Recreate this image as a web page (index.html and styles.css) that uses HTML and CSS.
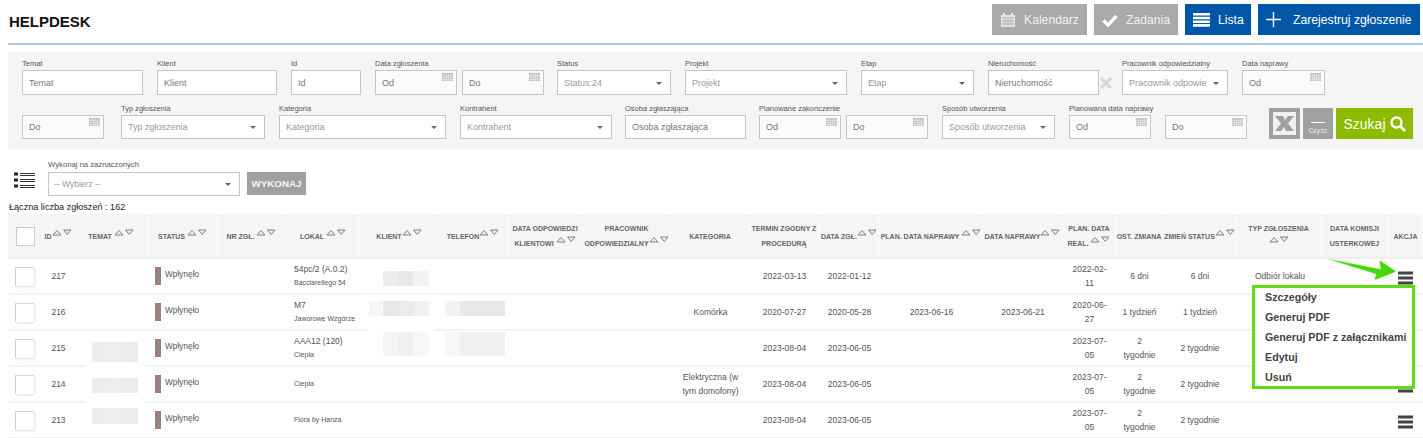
FILE: index.html
```html
<!DOCTYPE html>
<html lang="pl">
<head>
<meta charset="UTF-8">
<meta name="viewport" content="width=device-width, initial-scale=1.0">
<title>Helpdesk</title>
<link rel="stylesheet" href="styles.css">
</head>
<body>

<svg class="sprites" width="0" height="0">
  <symbol id="sort" viewBox="0 0 20 7">
    <path d="M1 6 L5 1.500 L9 6 Z M11.500 1 L19 1 L15.250 5.500 Z" fill="#eee" stroke="#777" stroke-width="0.9"/>
  </symbol>
  <symbol id="cal" viewBox="0 0 11 8">
    <path d="M0 0h11v8H0z" fill="#c4c4c4"/>
    <path d="M0 2.500h11M0 4.500h11M0 6.500h11M2.500 1v7M4.500 1v7M6.500 1v7M8.500 1v7" stroke="#eee" stroke-width="0.5"/>
  </symbol>
  <symbol id="burger" viewBox="0 0 15 14">
    <path d="M0 0.500h15v3H0zM0 5.500h15v3H0zM0 10.500h15v3H0z" fill="#444"/>
  </symbol>
</svg>

<div class="page">
  <header class="top">
    <h1>HELPDESK</h1>
    <nav class="top-btns">
      <a class="top-btn grey w-kal">
        <svg width="16" height="16" viewBox="0 0 16 16"><path d="M1 3h14v12H1z" fill="#e4e4e4"/><path d="M4 1v3M12 1v3" stroke="#e4e4e4" stroke-width="2"/><path d="M2 6h12M2 9h12M2 12h12M5 6v8M8 6v8M11 6v8" stroke="#aaa" stroke-width="0.8"/></svg>
        Kalendarz
      </a>
      <a class="top-btn grey w-zad">
        <svg width="16" height="14" viewBox="0 0 16 14"><path d="M1.500 7.500 L6 12 L14.500 3" fill="none" stroke="#fff" stroke-width="3.400"/></svg>
        Zadania
      </a>
      <a class="top-btn blue w-lista">
        <svg width="17" height="14" viewBox="0 0 17 14"><path d="M0 0h17v2.600H0zM0 3.700h17v2.600H0zM0 7.400h17v2.600H0zM0 11.100h17v2.600H0z" fill="#fff"/></svg>
        Lista
      </a>
      <a class="top-btn blue w-zar">
        <svg class="plus" width="15" height="15" viewBox="0 0 15 15"><path d="M7.500 0v15M0 7.500h15" stroke="#fff" stroke-width="1.400"/></svg>
        Zarejestruj zgłoszenie
      </a>
    </nav>
  </header>

  <section class="filters">
    <div class="f-row">
      <div class="field w121"><label>Temat</label><div class="inp">Temat</div></div>
      <div class="field w120"><label>Klient</label><div class="inp">Klient</div></div>
      <div class="field w70"><label>Id</label><div class="inp">Id</div></div>
      <div class="field w169">
        <label>Data zgłoszenia</label>
        <div class="dates">
          <div class="inp date">Od<svg class="cal"><use href="#cal"/></svg></div>
          <div class="inp date">Do<svg class="cal"><use href="#cal"/></svg></div>
        </div>
      </div>
      <div class="field w114 ml-1"><label>Status</label><div class="inp sel">Status:24</div></div>
      <div class="field w162"><label>Projekt</label><div class="inp sel">Projekt</div></div>
      <div class="field w113"><label>Etap</label><div class="inp sel">Etap</div></div>
      <div class="field w111"><label>Nieruchomość</label><div class="inp">Nieruchomość</div></div>
      <svg class="clear-x" width="12" height="12" viewBox="0 0 12 12"><path d="M1 1 L11 11 M11 1 L1 11" stroke="#d6d6d6" stroke-width="3"/></svg>
      <div class="field w106"><label>Pracownik odpowiedzialny</label><div class="inp sel">Pracownik odpowie</div></div>
      <div class="field w83"><label>Data naprawy</label><div class="inp date">Od<svg class="cal"><use href="#cal"/></svg></div></div>
    </div>

    <div class="f-row second">
      <div class="field w82"><div class="inp date">Do<svg class="cal"><use href="#cal"/></svg></div></div>
      <div class="field w144 ml3"><label>Typ zgłoszenia</label><div class="inp sel">Typ zgłoszenia</div></div>
      <div class="field w167"><label>Kategoria</label><div class="inp sel">Kategoria</div></div>
      <div class="field w152"><label>Kontrahent</label><div class="inp sel">Kontrahent</div></div>
      <div class="field w121 ml-1"><label>Osoba zgłaszająca</label><div class="inp">Osoba zgłaszająca</div></div>
      <div class="field w169 ml-1">
        <label>Planowane zakończenie</label>
        <div class="dates">
          <div class="inp date">Od<svg class="cal"><use href="#cal"/></svg></div>
          <div class="inp date">Do<svg class="cal"><use href="#cal"/></svg></div>
        </div>
      </div>
      <div class="field w113"><label>Sposób utworzenia</label><div class="inp sel">Sposób utworzenia</div></div>
      <div class="field w82"><label>Planowana data naprawy</label><div class="inp date">Od<svg class="cal"><use href="#cal"/></svg></div></div>
      <div class="field w82"><div class="inp date">Do<svg class="cal"><use href="#cal"/></svg></div></div>
      <div class="f-actions">
        <a class="btn-excel">
          <svg width="31" height="31" viewBox="0 0 31 31"><path d="M0 0h31v31H0z" fill="#a0a0a0"/><path d="M4 4h23v23H4z" fill="#f0f0f0"/><path d="M6 8h8l2 4 3-4h6l-6 7.500 6 7.500h-8l-2-4-3 4H6l6-7.500z" fill="#a0a0a0"/></svg>
        </a>
        <a class="btn-clear"><span class="dash"></span><span class="clear-txt">Czyść</span></a>
        <a class="btn-search">Szukaj
          <svg width="16" height="16" viewBox="0 0 16 16"><circle cx="6.500" cy="6.500" r="5" fill="none" stroke="#fff" stroke-width="2.400"/><path d="M10.500 10.500 L15 15" stroke="#fff" stroke-width="2.800"/></svg>
        </a>
      </div>
    </div>
  </section>

  <section class="bulk">
    <svg class="bulk-icon" width="21" height="16" viewBox="0 0 21 16"><path d="M0 0.500h4v3H0zM0 6.500h4v3H0zM0 12.500h4v3H0z" fill="#222"/><path d="M6 1h15v1H6zM6 3h15v1H6zM6 7h15v1H6zM6 9h15v1H6zM6 13h15v1H6zM6 15h15v1H6z" fill="#333"/></svg>
    <div class="bulk-field">
      <label>Wykonaj na zaznaczonych</label>
      <div class="inp sel">-- Wybierz --</div>
    </div>
    <a class="btn-run">WYKONAJ</a>
  </section>

  <p class="count">Łączna liczba zgłoszeń : 162</p>

  <div class="table-wrap">
    <table class="tickets">
      <colgroup>
        <col class="c35"><col class="c31"><col class="c75"><col class="c68"><col class="c70">
        <col class="c73"><col class="c79"><col class="c69"><col class="c75"><col class="c88">
        <col class="c79"><col class="c69"><col class="c61"><col class="c103"><col class="c80">
        <col class="c53"><col class="c47"><col class="c74"><col class="c84"><col class="c68"><col class="c34">
      </colgroup>
      <thead>
        <tr>
          <th><span class="check head"></span></th>
          <th>ID<svg class="sort"><use href="#sort"/></svg></th>
          <th>TEMAT <svg class="sort"><use href="#sort"/></svg></th>
          <th>STATUS <svg class="sort"><use href="#sort"/></svg></th>
          <th>NR ZGŁ. <svg class="sort"><use href="#sort"/></svg></th>
          <th>LOKAL <svg class="sort"><use href="#sort"/></svg></th>
          <th>KLIENT<svg class="sort"><use href="#sort"/></svg></th>
          <th>TELEFON<svg class="sort"><use href="#sort"/></svg></th>
          <th>DATA ODPOWIEDZI KLIENTOWI <svg class="sort"><use href="#sort"/></svg></th>
          <th>PRACOWNIK ODPOWIEDZIALNY<svg class="sort"><use href="#sort"/></svg></th>
          <th>KATEGORIA</th>
          <th>TERMIN ZGODNY Z PROCEDURĄ</th>
          <th>DATA ZGŁ.<svg class="sort"><use href="#sort"/></svg></th>
          <th>PLAN. DATA NAPRAWY <svg class="sort"><use href="#sort"/></svg></th>
          <th>DATA NAPRAWY<svg class="sort"><use href="#sort"/></svg></th>
          <th>PLAN. DATA REAL. <svg class="sort"><use href="#sort"/></svg></th>
          <th>OST. ZMIANA</th>
          <th>ZMIEŃ STATUS<svg class="sort"><use href="#sort"/></svg></th>
          <th class="pad">TYP ZGŁOSZENIA <svg class="sort"><use href="#sort"/></svg></th>
          <th>DATA KOMISJI USTERKOWEJ</th>
          <th>AKCJA</th>
        </tr>
      </thead>
      <tbody>
        <tr>
          <td><span class="check"></span></td>
          <td>217</td>
          <td></td>
          <td class="left"><div class="status"><i class="swatch"></i><span>Wpłynęło</span></div></td>
          <td></td>
          <td class="left lokal">54pc/2 (A.0.2)<small>Bacciarellego 54</small></td>
          <td><div class="blur blur-short"></div></td>
          <td></td><td></td><td></td><td></td>
          <td>2022-03-13</td>
          <td>2022-01-12</td>
          <td></td><td></td>
          <td class="narrow">2022-02-11</td>
          <td class="narrow">6 dni</td>
          <td>6 dni</td>
          <td class="left typ">Odbiór lokalu</td>
          <td></td>
          <td class="akcja"><svg class="burger"><use href="#burger"/></svg></td>
        </tr>
        <tr>
          <td><span class="check"></span></td>
          <td>216</td>
          <td></td>
          <td class="left"><div class="status"><i class="swatch"></i><span>Wpłynęło</span></div></td>
          <td></td>
          <td class="left lokal">M7<small>Jaworowe Wzgórze</small></td>
          <td><div class="blur blur-wide"></div></td>
          <td><div class="blur blur-wide tel"></div></td>
          <td></td><td></td>
          <td>Komórka</td>
          <td>2020-07-27</td>
          <td>2020-05-28</td>
          <td>2023-06-16</td>
          <td>2023-06-21</td>
          <td class="narrow">2020-06-27</td>
          <td class="narrow">1 tydzień</td>
          <td>1 tydzień</td>
          <td></td><td></td>
          <td class="akcja"><svg class="burger"><use href="#burger"/></svg></td>
        </tr>
        <tr>
          <td><span class="check"></span></td>
          <td>215</td>
          <td><div class="blur blur-temat r3"></div></td>
          <td class="left"><div class="status"><i class="swatch"></i><span>Wpłynęło</span></div></td>
          <td></td>
          <td class="left lokal">AAA12 (120)<small>Ciepła</small></td>
          <td><div class="blur blur-faint"></div></td>
          <td><div class="blur blur-faint tel"></div></td>
          <td></td><td></td><td></td>
          <td>2023-08-04</td>
          <td>2023-06-05</td>
          <td></td><td></td>
          <td class="narrow">2023-07-05</td>
          <td class="narrow">2 tygodnie</td>
          <td>2 tygodnie</td>
          <td></td><td></td>
          <td class="akcja"><svg class="burger"><use href="#burger"/></svg></td>
        </tr>
        <tr>
          <td><span class="check"></span></td>
          <td>214</td>
          <td><div class="blur blur-temat r4"></div></td>
          <td class="left"><div class="status"><i class="swatch"></i><span>Wpłynęło</span></div></td>
          <td></td>
          <td class="left lokal"><small>Ciepła</small></td>
          <td></td><td></td><td></td><td></td>
          <td class="pad">Elektryczna (w tym domofony)</td>
          <td>2023-08-04</td>
          <td>2023-06-05</td>
          <td></td><td></td>
          <td class="narrow">2023-07-05</td>
          <td class="narrow">2 tygodnie</td>
          <td>2 tygodnie</td>
          <td></td><td></td>
          <td class="akcja"><svg class="burger"><use href="#burger"/></svg></td>
        </tr>
        <tr>
          <td><span class="check"></span></td>
          <td>213</td>
          <td><div class="blur blur-temat r5"></div></td>
          <td class="left"><div class="status"><i class="swatch"></i><span>Wpłynęło</span></div></td>
          <td></td>
          <td class="left lokal"><small>Flora by Hanza</small></td>
          <td></td><td></td><td></td><td></td><td></td>
          <td>2023-08-04</td>
          <td>2023-06-05</td>
          <td></td><td></td>
          <td class="narrow">2023-07-05</td>
          <td class="narrow">2 tygodnie</td>
          <td>2 tygodnie</td>
          <td></td><td></td>
          <td class="akcja"><svg class="burger"><use href="#burger"/></svg></td>
        </tr>
      </tbody>
    </table>

    <svg class="arrow" width="72" height="26" viewBox="0 0 72 26"><path d="M1 1 L54 11.500 L52.500 2.500 L69 13.500 L47.500 22 L49.500 16 Z" fill="#45d60c"/></svg>

    <ul class="menu">
      <li>Szczegóły</li>
      <li>Generuj PDF</li>
      <li>Generuj PDF z załącznikami</li>
      <li>Edytuj</li>
      <li>Usuń</li>
    </ul>
  </div>
</div>

</body>
</html>
```

FILE: styles.css
```css
* {
  box-sizing: border-box;
}
html, body {
  height: 438px;
  overflow: hidden;
}
body {
  font-family: "Liberation Sans", Arial, sans-serif;
  margin: 0;
  padding: 0;
  background-color: #fff;
  color: #555;
}
.sprites {
  display: block;
  height: 0;
}
.page {
  padding-left: 8px;
}

/* top bar */
.top {
  display: flex;
  justify-content: space-between;
  height: 45px;
  padding: 4px 3px 0 1px;
  border-bottom: 2px solid #a6c8e4;
}
.top h1 {
  margin: 9px 0 0;
  font-size: 15px;
  line-height: 17px;
  color: #111;
}
.top-btns {
  display: flex;
  gap: 7px;
}
.top-btn {
  display: flex;
  align-items: center;
  gap: 8px;
  height: 31px;
  padding-left: 8px;
  font-size: 12.2px;
  color: #fff;
}
.top-btn.grey {
  background-color: #aaa;
  color: #f0f0f0;
}
.top-btn.blue {
  background-color: #0057a8;
}
.top-btn .plus {
  margin-right: 4px;
}
.w-kal { width: 95px; }
.w-zad { width: 84px; }
.w-lista { width: 66px; }
.w-zar { width: 162px; }

/* filters */
.filters {
  margin-top: 7px;
  height: 98px;
  padding: 7px 0 0 14px;
  background-color: #f5f5f5;
}
.f-row {
  display: flex;
  align-items: flex-end;
  gap: 14px;
}
.f-row.second {
  margin-top: 9px;
}
.field label, .bulk-field label {
  display: block;
  height: 11px;
  font-size: 7.5px;
  line-height: 9px;
  color: #555;
  white-space: nowrap;
}
.inp {
  position: relative;
  display: flex;
  align-items: center;
  height: 25px;
  padding-left: 6px;
  background-color: #fff;
  border: 1px solid #c6c6c6;
  font-size: 9px;
  color: #777;
  white-space: nowrap;
  overflow: hidden;
}
.second .inp {
  height: 24px;
}
.inp.date {
  background-color: #fbfbfb;
}
.inp.sel {
  padding-right: 20px;
  color: #999;
}
.inp.sel::after {
  content: "";
  position: absolute;
  right: 8px;
  top: 50%;
  margin-top: -1px;
  border: 3px solid transparent;
  border-top: 3px solid #666;
  border-bottom: 0;
}
.cal {
  position: absolute;
  right: 3px;
  top: 2px;
  width: 11px;
  height: 8px;
}
.dates {
  display: flex;
  gap: 5px;
}
.dates .inp {
  width: 82px;
}
.w70 { width: 70px; }
.w82 { width: 82px; }
.w83 { width: 83px; }
.w106 { width: 106px; }
.w111 { width: 111px; }
.w113 { width: 113px; }
.w114 { width: 114px; }
.w120 { width: 120px; }
.w121 { width: 121px; }
.w144 { width: 144px; }
.w152 { width: 152px; }
.w162 { width: 162px; }
.w167 { width: 167px; }
.w169 { width: 169px; }
.ml3 { margin-left: 3px; }
.ml-1 { margin-left: -1px; }
.clear-x {
  flex: none;
  margin: 0 -4px 6px -13px;
}
.f-actions {
  display: flex;
  gap: 3px;
  margin-left: 8px;
}
.btn-excel {
  display: block;
  width: 31px;
  height: 31px;
}
.btn-clear {
  display: flex;
  flex-direction: column;
  align-items: center;
  width: 30px;
  height: 31px;
  background-color: #a0a0a0;
}
.btn-clear .dash {
  width: 14px;
  height: 1px;
  margin-top: 14px;
  background-color: #fff;
}
.btn-clear .clear-txt {
  margin-top: 4px;
  font-size: 6.5px;
  font-weight: bold;
  color: #ddd;
}
.btn-search {
  display: flex;
  align-items: center;
  justify-content: center;
  gap: 4px;
  width: 77px;
  height: 31px;
  background-color: #8dbb00;
  color: #fff;
  font-size: 14px;
}

/* bulk action row */
.bulk {
  display: flex;
  align-items: flex-start;
  height: 36px;
  margin-top: 10px;
}
.bulk-icon {
  margin: 12px 13px 0 6px;
}
.bulk-field {
  width: 192px;
}
.bulk-field label {
  height: 12px;
  font-size: 7.7px;
  line-height: 10px;
}
.bulk-field .inp {
  height: 24px;
  padding-left: 5px;
  font-size: 8.5px;
}
.btn-run {
  display: flex;
  align-items: center;
  justify-content: center;
  width: 59px;
  height: 23px;
  margin: 12px 0 0 7px;
  background-color: #a0a0a0;
  color: #f4f4f4;
  font-size: 9.8px;
  font-weight: bold;
}
.count {
  margin: 5px 0 1px 1px;
  font-size: 9.1px;
  line-height: 12px;
  color: #222;
}

/* table */
.table-wrap {
  position: relative;
}
.tickets {
  width: 1415px;
  table-layout: fixed;
  border-collapse: separate;
  border-spacing: 0;
}
.c31 { width: 31px; }
.c34 { width: 34px; }
.c35 { width: 35px; }
.c47 { width: 47px; }
.c53 { width: 53px; }
.c61 { width: 61px; }
.c68 { width: 68px; }
.c69 { width: 69px; }
.c70 { width: 70px; }
.c73 { width: 73px; }
.c74 { width: 74px; }
.c75 { width: 75px; }
.c79 { width: 79px; }
.c80 { width: 80px; }
.c84 { width: 84px; }
.c88 { width: 88px; }
.c103 { width: 103px; }
.tickets th {
  height: 45px;
  padding: 1px 0 0;
  background-color: #f5f5f5;
  border-right: 1px solid #fafafa;
  border-bottom: 2px solid #eee;
  font-size: 7px;
  line-height: 15px;
  font-weight: bold;
  color: #666;
  text-align: center;
}
.tickets th.pad {
  padding: 0 10px;
}
.sort {
  width: 20px;
  height: 7px;
  vertical-align: 3px;
}
.tickets td {
  height: 36px;
  padding: 0;
  border-bottom: 2px solid #f3f3f3;
  font-size: 8.5px;
  line-height: 14px;
  text-align: center;
  vertical-align: middle;
  color: #555;
}
.tickets td.narrow {
  padding: 0 6px;
}
.tickets td.pad {
  padding: 0 8px;
}
.tickets td.left {
  text-align: left;
  padding-left: 6px;
}
.tickets td.lokal {
  padding-left: 7px;
}
.lokal small {
  display: block;
  font-size: 7px;
}
.tickets td.typ {
  padding-left: 18px;
}
.check {
  display: block;
  width: 19px;
  height: 19px;
  margin-left: 7px;
  background-color: #fff;
  border-top: 1px solid #d8d8d8;
  border-left: 1px solid #d0d0d0;
  box-shadow: 1px 1px 2px #ddd;
}
.check.head {
  margin-left: 8px;
  border: 1px solid #ccc;
  box-shadow: none;
}
.status {
  display: flex;
  align-items: center;
  gap: 4px;
}
.swatch {
  width: 6px;
  height: 18px;
  background-color: #9b8080;
}
.status span {
  margin-bottom: 4px;
  font-size: 8.3px;
}
.akcja {
  padding-right: 10px !important;
}
.burger {
  display: block;
  width: 15px;
  height: 14px;
  margin: 3px 0 0 auto;
}

/* blurred data */
.blur {
  height: 15px;
  box-shadow: 0 0 0 7px #fff;
}
.blur-short {
  width: 46px;
  margin: 5px 0 0 23px;
  background: linear-gradient(90deg, #ececec 0 32%, #e8e8e8 32% 66%, #f3f3f3 66%);
  box-shadow: 0 0 0 7px #fff, -7px 0 0 7px #fff;
}
.blur-wide {
  width: 60px;
  margin: 0 0 7px 9px;
  background: linear-gradient(90deg, #f6f6f6 0 23%, #e8e8e8 23% 48%, #ebebeb 48% 75%, #f1f1f1 75%);
}
.blur-wide.tel {
  margin-left: 6px;
  background: linear-gradient(90deg, #f3f3f3 0 25%, #e8e8e8 25%);
  box-shadow: none;
}
.blur-faint {
  width: 46px;
  height: 24px;
  margin: 0 0 8px 23px;
  background: linear-gradient(90deg, #f5f5f5 0 32%, #f1f1f1 32% 66%, #f8f8f8 66%);
  box-shadow: 0 0 0 7px #fff, -7px 0 0 7px #fff;
}
.blur-faint.tel {
  width: 60px;
  margin-left: 6px;
  background: linear-gradient(90deg, #f8f8f8 0 25%, #f0f0f0 25%);
  box-shadow: none;
}
.blur-temat {
  width: 46px;
  margin-left: 18px;
  background: linear-gradient(90deg, #ececec 0 33%, #eeeeee 33% 66%, #ebebeb 66%);
}
.blur-temat.r3 {
  height: 20px;
  margin-top: 8px;
}
.blur-temat.r4 {
  margin-top: 3px;
}
.blur-temat.r5 {
  height: 16px;
  margin-bottom: 8px;
}
.arrow {
  position: absolute;
  left: 1319px;
  top: 44px;
  filter: drop-shadow(0 0 1px #b8f0a0);
}
.menu {
  position: absolute;
  left: 1244px;
  top: 71px;
  width: 163px;
  height: 104px;
  margin: 0;
  padding: 0 0 0 10px;
  list-style: none;
  background-color: #fff;
  border: 3px solid #5fdd10;
}
.menu li {
  height: 20px;
  font-size: 10.7px;
  line-height: 19px;
  font-weight: bold;
  color: #444;
  white-space: nowrap;
}
```
